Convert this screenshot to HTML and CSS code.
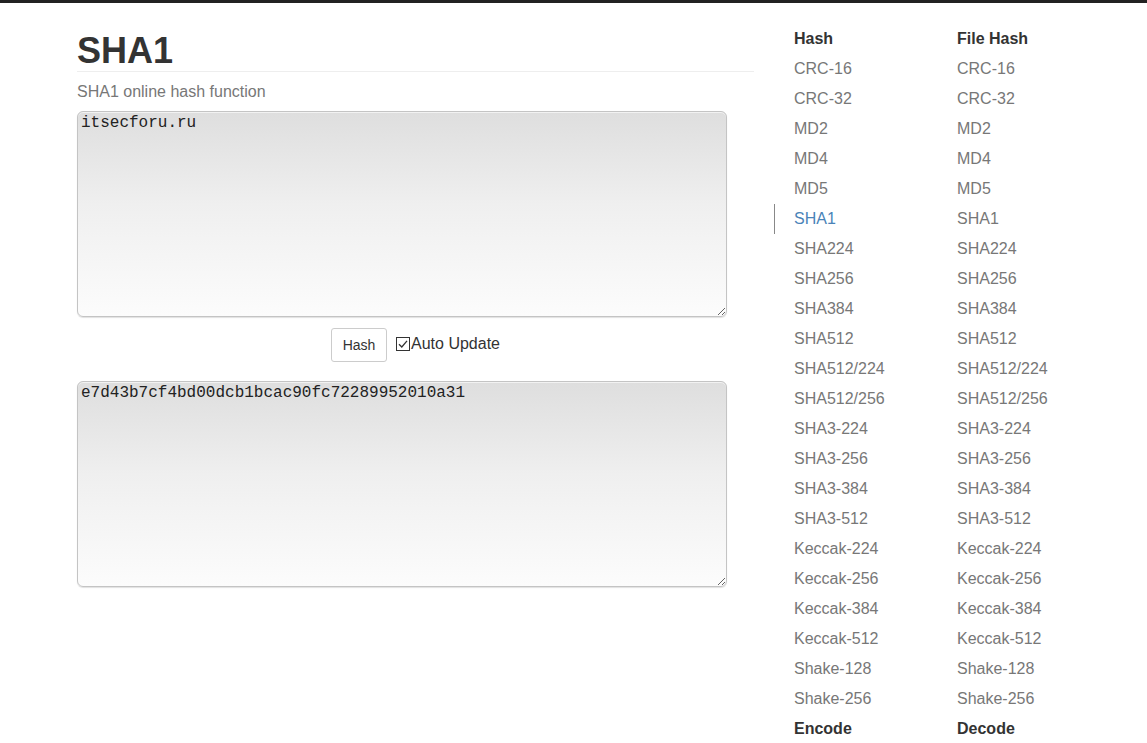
FILE: index.html
```html
<!DOCTYPE html>
<html>
<head>
<meta charset="utf-8">
<title>SHA1</title>
<link rel="stylesheet" href="styles.css">
</head>
<body>
<div class="page">
  <main class="main">
    <h1 class="title">SHA1</h1>
    <p class="subtitle">SHA1 online hash function</p>
    <textarea class="box" spellcheck="false">itsecforu.ru</textarea>
    <div class="controls">
      <button class="btn" type="button">Hash</button>
      <label class="auto">
        <svg class="check" width="14" height="14" viewBox="0 0 14 14"><rect x="0.5" y="0.5" width="13" height="13" fill="#fff" stroke="#333"/><path d="M3 7.2 L5.8 10 L11 3.8" fill="none" stroke="#333" stroke-width="1.3"/></svg>Auto Update
      </label>
    </div>
    <textarea class="box" spellcheck="false">e7d43b7cf4bd00dcb1bcac90fc72289952010a31</textarea>
  </main>
  <nav class="side">
    <ul class="col">
      <li class="head">Hash</li>
      <li>CRC-16</li>
      <li>CRC-32</li>
      <li>MD2</li>
      <li>MD4</li>
      <li>MD5</li>
      <li class="active">SHA1</li>
      <li>SHA224</li>
      <li>SHA256</li>
      <li>SHA384</li>
      <li>SHA512</li>
      <li>SHA512/224</li>
      <li>SHA512/256</li>
      <li>SHA3-224</li>
      <li>SHA3-256</li>
      <li>SHA3-384</li>
      <li>SHA3-512</li>
      <li>Keccak-224</li>
      <li>Keccak-256</li>
      <li>Keccak-384</li>
      <li>Keccak-512</li>
      <li>Shake-128</li>
      <li>Shake-256</li>
      <li class="head">Encode</li>
    </ul>
    <ul class="col">
      <li class="head">File Hash</li>
      <li>CRC-16</li>
      <li>CRC-32</li>
      <li>MD2</li>
      <li>MD4</li>
      <li>MD5</li>
      <li>SHA1</li>
      <li>SHA224</li>
      <li>SHA256</li>
      <li>SHA384</li>
      <li>SHA512</li>
      <li>SHA512/224</li>
      <li>SHA512/256</li>
      <li>SHA3-224</li>
      <li>SHA3-256</li>
      <li>SHA3-384</li>
      <li>SHA3-512</li>
      <li>Keccak-224</li>
      <li>Keccak-256</li>
      <li>Keccak-384</li>
      <li>Keccak-512</li>
      <li>Shake-128</li>
      <li>Shake-256</li>
      <li class="head">Decode</li>
    </ul>
  </nav>
</div>
</body>
</html>
```
FILE: styles.css
```css
html, body {
  margin: 0;
  padding: 0;
  background: #fff;
  overflow: hidden;
}
body {
  border-top: 3px solid #222;
  font-family: "Liberation Sans", Arial, sans-serif;
  color: #333;
  height: 740px;
}
.page {
  display: flex;
  padding-left: 77px;
  gap: 20px;
}
.main {
  width: 677px;
  flex: none;
}
.title {
  margin: 28px 0 0;
  font-size: 36px;
  line-height: 40px;
  font-weight: bold;
  color: #333;
  border-bottom: 1px solid #eee;
}
.subtitle {
  margin: 10px 0 9px;
  font-size: 16px;
  line-height: 20px;
  color: #777;
}
.box {
  display: block;
  box-sizing: border-box;
  width: 650px;
  height: 206px;
  margin: 0;
  padding: 2px 3px;
  border: 1px solid #c4c4c4;
  border-radius: 6px;
  box-shadow: 0 1px 1px rgba(0,0,0,0.12), inset 0 1px 0 #f2f2f2;
  background: linear-gradient(to bottom, #dedede 0%, #efefef 45%, #fcfcfc 100%);
  font-family: "Liberation Mono", "Courier New", monospace;
  font-size: 16px;
  line-height: 18px;
  color: #222;
  resize: both;
  outline: none;
}
.controls {
  display: flex;
  justify-content: center;
  align-items: center;
  gap: 9px;
  margin: 11px 0 19px;
}
.btn {
  box-sizing: border-box;
  height: 34px;
  width: 56px;
  padding: 0;
  background: #fff;
  border: 1px solid #ccc;
  border-radius: 3px;
  font-family: "Liberation Sans", Arial, sans-serif;
  font-size: 14px;
  color: #333;
}
.auto {
  display: flex;
  align-items: center;
  gap: 1px;
  font-size: 16px;
  color: #333;
  margin-top: -3px;
}
.check {
  display: block;
}
.side {
  display: flex;
  padding-top: 21px;
}
.col {
  list-style: none;
  margin: 0;
  padding: 0;
  width: 163px;
}
.col li {
  box-sizing: border-box;
  height: 30px;
  line-height: 30px;
  padding-left: 20px;
  font-size: 16px;
  color: #777;
  white-space: nowrap;
}
.col li.head {
  font-weight: bold;
  color: #333;
}
.col li.active {
  color: #4a83b8;
  border-left: 1px solid #888;
  padding-left: 19px;
}
```
